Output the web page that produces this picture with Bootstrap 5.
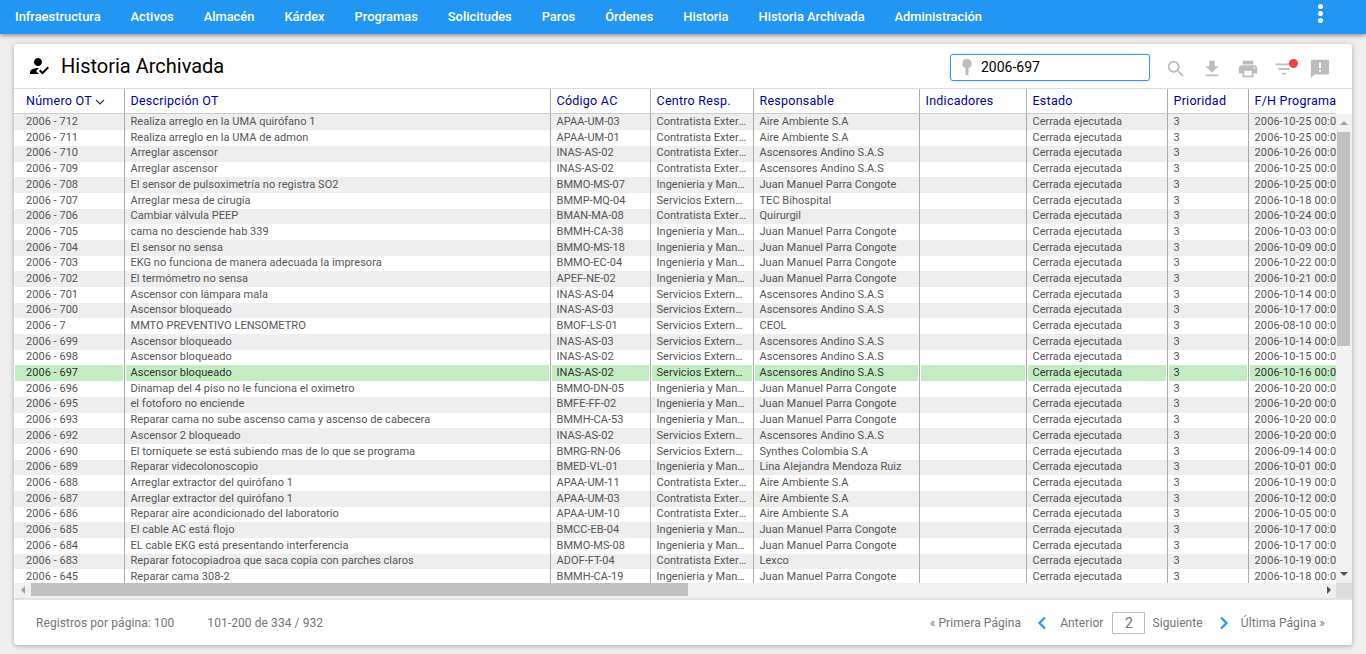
<!doctype html>
<html lang="es"><head><meta charset="utf-8"><title>Historia Archivada</title>
<link href="https://cdn.jsdelivr.net/npm/bootstrap@5.3.0/dist/css/bootstrap.min.css" rel="stylesheet">
<style>
html,body{height:654px;overflow:hidden}
body{background:#eee;font-family:Roboto,"Liberation Sans",sans-serif;color:#000}
.topbar{height:34px;background:#2196f3;box-shadow:0 2px 4px rgba(0,0,0,.35);padding:0 0 0 15px;gap:30px}
.topbar a{color:#fff;font-size:12.88px;font-weight:500;text-decoration:none;line-height:34px}
.dots{margin-left:auto;margin-right:43px;gap:2px;margin-top:-7px}
.dots i{display:block;width:5px;height:5px;border-radius:50%;background:#fff}
.panel{margin:10px 14px 9px;width:1338px;height:601px;background:#fff;border-radius:3px;box-shadow:0 1px 5px rgba(0,0,0,.3);overflow:hidden}
.phead{height:45px;padding-left:13px;border-bottom:1px solid #ddd}
.phead h1{font-size:20px;font-weight:400;margin:0 0 0 10px}
.keybox{width:200px;height:27px;border:1px solid #3f8fef;border-radius:3px;margin-left:auto;margin-right:15px;margin-top:4px;padding-left:11px;font-size:14px;gap:9px;box-shadow:0 0 2px rgba(33,150,243,.4)}
.tools{gap:14px;margin-right:21px;margin-top:6px}
.tools svg{width:22px;height:22px;fill:#bdbdbd;display:block}
.filt{position:relative}
.filt b{position:absolute;right:-3px;top:1px;width:9px;height:9px;border-radius:50%;background:#f44336}
.hcols,.gridwrap{width:1322px;overflow:hidden}
.gridwrap{height:469px}
.htable,.gtable{table-layout:fixed;width:1424px;border-collapse:collapse;margin:0}
.htable th{height:25px;font-size:12.5px;font-weight:400;color:#00009c;padding:2px 0 0 6px;border-left:1px solid #aaa;border-bottom:2px solid #ccc;white-space:nowrap;overflow:hidden;letter-spacing:.25px;vertical-align:middle}
.htable th:first-child,.gtable td:first-child{border-left:0;padding-left:12px}
.gtable tr{height:15.7px}
.gtable td{font-size:11px;line-height:14px;color:#555;padding:0 5px .4px 6px;border-left:1px solid #aaa;white-space:nowrap;overflow:hidden;text-overflow:ellipsis;height:15.7px;letter-spacing:.03px}
.gtable tr:nth-child(odd) td{background:#eee}
.gtable tr.picked td{background:#c3ecc4;color:#333;box-shadow:inset 1px 0 #fff,inset -1px 0 #fff}
.gtable td:last-child{text-overflow:clip;letter-spacing:.15px}
.vbar{width:16px;background:#f1f1f1;position:relative}
.vbar .thumb{position:absolute;left:1px;right:2px;top:18px;height:214px;background:#c1c1c1}
.arrow{position:absolute;width:0;height:0;border:4px solid transparent}
.hbar{height:15px;background:#f1f1f1;position:relative}
.hbar .thumb{position:absolute;left:17px;top:0;width:657px;height:13px;background:#c1c1c1}
.hbar .corner{position:absolute;right:0;top:0;width:16px;height:15px;background:#dcdcdc}
.pfoot{height:47px;border-top:2px solid #e3e3e3;padding:0 27px 0 22px;font-size:12px;color:#757575;letter-spacing:.08px}
.pfoot .sp{margin-left:33px}
.pageno{width:33px;height:22px;border:1px solid #bbb;border-radius:1px;text-align:center;line-height:20px;font-size:14px;margin:0 7px 0 9px}
.chev{width:10px;height:14px;fill:none;stroke:#2196f3;stroke-width:2.2;margin:0 13px 0 16px}
.chev.nx{margin:0 12px 0 16px}
</style></head><body>
<nav class="topbar d-flex align-items-center">
<a href="#">Infraestructura</a><a href="#">Activos</a><a href="#">Almacén</a><a href="#">Kárdex</a><a href="#">Programas</a><a href="#">Solicitudes</a><a href="#">Paros</a><a href="#">Órdenes</a><a href="#">Historia</a><a href="#">Historia Archivada</a><a href="#">Administración</a>
<span class="dots d-flex flex-column"><i></i><i></i><i></i></span>
</nav>
<section class="panel d-flex flex-column">
<header class="phead d-flex align-items-center">
<svg width="24" height="24" viewBox="0 0 24 24"><path d="M9 17l3-2.94c-.39-.04-.68-.06-1-.06-2.67 0-8 1.34-8 4v2h9l-3-3zm2-5c2.21 0 4-1.79 4-4s-1.79-4-4-4-4 1.79-4 4 1.79 4 4 4M15.47 20.5L12 17l1.4-1.41 2.07 2.08 5.13-5.17 1.4 1.41z"/></svg>
<h1>Historia Archivada</h1>
<div class="keybox d-flex align-items-center"><svg width="10" height="17" viewBox="0 0 10 17" fill="#bdbdbd"><path d="M5 0a4.6 4.6 0 0 1 1.7 8.9L6.3 16.5H3.7L3.3 8.9A4.6 4.6 0 0 1 5 0z"/></svg><span>2006-697</span></div>
<div class="tools d-flex align-items-center">
<svg viewBox="0 0 24 24"><path d="M15.5 14h-.79l-.28-.27A6.471 6.471 0 0 0 16 9.5 6.5 6.5 0 1 0 9.5 16c1.61 0 3.09-.59 4.23-1.57l.27.28v.79l5 4.99L20.49 19l-4.99-5zm-6 0C7.01 14 5 11.99 5 9.5S7.01 5 9.5 5 14 7.01 14 9.5 11.99 14 9.5 14z"/></svg>
<svg viewBox="0 0 24 24"><path d="M19 9h-4V3H9v6H5l7 7 7-7zM5 18v2h14v-2H5z"/></svg>
<svg viewBox="0 0 24 24"><path d="M19 8H5c-1.66 0-3 1.34-3 3v6h4v4h12v-4h4v-6c0-1.66-1.34-3-3-3zm-3 11H8v-5h8v5zm3-7c-.55 0-1-.45-1-1s.45-1 1-1 1 .45 1 1-.45 1-1 1zm-1-9H6v4h12V3z"/></svg>
<span class="filt"><svg viewBox="0 0 24 24"><path d="M10 18h4v-2h-4v2zM3 6v2h18V6H3zm3 7h12v-2H6v2z"/></svg><b></b></span>
<svg viewBox="0 0 24 24"><path d="M20 2H4c-1.1 0-1.99.9-1.99 2L2 22l4-4h14c1.1 0 2-.9 2-2V4c0-1.1-.9-2-2-2zm-7 9h-2V5h2v6zm0 4h-2v-2h2v2z"/></svg>
</div>
</header>
<div class="hcols"><table class="htable"><colgroup><col style="width:110px"><col style="width:426px"><col style="width:100px"><col style="width:103px"><col style="width:166px"><col style="width:107px"><col style="width:141px"><col style="width:81px"><col style="width:190px"></colgroup><tr><th>Número OT <svg width="10" height="6" viewBox="0 0 10 6" fill="none" stroke="#333" stroke-width="1.2"><path d="M1 1l4 4 4-4"/></svg></th><th>Descripción OT</th><th>Código AC</th><th>Centro Resp.</th><th>Responsable</th><th>Indicadores</th><th>Estado</th><th>Prioridad</th><th>F/H Programada</th></tr></table></div>
<div class="d-flex">
<div class="gridwrap"><table class="gtable"><colgroup><col style="width:110px"><col style="width:426px"><col style="width:100px"><col style="width:103px"><col style="width:166px"><col style="width:107px"><col style="width:141px"><col style="width:81px"><col style="width:190px"></colgroup><tbody>
<tr><td>2006 - 712</td><td>Realiza arreglo en la UMA quirófano 1</td><td>APAA-UM-03</td><td>Contratista Externo</td><td>Aire Ambiente S.A</td><td></td><td>Cerrada ejecutada</td><td>3</td><td>2006-10-25 00:00</td></tr>
<tr><td>2006 - 711</td><td>Realiza arreglo en la UMA de admon</td><td>APAA-UM-01</td><td>Contratista Externo</td><td>Aire Ambiente S.A</td><td></td><td>Cerrada ejecutada</td><td>3</td><td>2006-10-25 00:00</td></tr>
<tr><td>2006 - 710</td><td>Arreglar ascensor</td><td>INAS-AS-02</td><td>Contratista Externo</td><td>Ascensores Andino S.A.S</td><td></td><td>Cerrada ejecutada</td><td>3</td><td>2006-10-26 00:00</td></tr>
<tr><td>2006 - 709</td><td>Arreglar ascensor</td><td>INAS-AS-02</td><td>Contratista Externo</td><td>Ascensores Andino S.A.S</td><td></td><td>Cerrada ejecutada</td><td>3</td><td>2006-10-25 00:00</td></tr>
<tr><td>2006 - 708</td><td>El sensor de pulsoximetría no registra SO2</td><td>BMMO-MS-07</td><td>Ingenieria y Mantenimiento</td><td>Juan Manuel Parra Congote</td><td></td><td>Cerrada ejecutada</td><td>3</td><td>2006-10-25 00:00</td></tr>
<tr><td>2006 - 707</td><td>Arreglar mesa de cirugía</td><td>BMMP-MQ-04</td><td>Servicios Externalizados</td><td>TEC Bihospital</td><td></td><td>Cerrada ejecutada</td><td>3</td><td>2006-10-18 00:00</td></tr>
<tr><td>2006 - 706</td><td>Cambiar válvula PEEP</td><td>BMAN-MA-08</td><td>Contratista Externo</td><td>Quirurgil</td><td></td><td>Cerrada ejecutada</td><td>3</td><td>2006-10-24 00:00</td></tr>
<tr><td>2006 - 705</td><td>cama no desciende hab 339</td><td>BMMH-CA-38</td><td>Ingenieria y Mantenimiento</td><td>Juan Manuel Parra Congote</td><td></td><td>Cerrada ejecutada</td><td>3</td><td>2006-10-03 00:00</td></tr>
<tr><td>2006 - 704</td><td>El sensor no sensa</td><td>BMMO-MS-18</td><td>Ingenieria y Mantenimiento</td><td>Juan Manuel Parra Congote</td><td></td><td>Cerrada ejecutada</td><td>3</td><td>2006-10-09 00:00</td></tr>
<tr><td>2006 - 703</td><td>EKG no funciona de manera adecuada la impresora</td><td>BMMO-EC-04</td><td>Ingenieria y Mantenimiento</td><td>Juan Manuel Parra Congote</td><td></td><td>Cerrada ejecutada</td><td>3</td><td>2006-10-22 00:00</td></tr>
<tr><td>2006 - 702</td><td>El termómetro no sensa</td><td>APEF-NE-02</td><td>Ingenieria y Mantenimiento</td><td>Juan Manuel Parra Congote</td><td></td><td>Cerrada ejecutada</td><td>3</td><td>2006-10-21 00:00</td></tr>
<tr><td>2006 - 701</td><td>Ascensor con lámpara mala</td><td>INAS-AS-04</td><td>Servicios Externalizados</td><td>Ascensores Andino S.A.S</td><td></td><td>Cerrada ejecutada</td><td>3</td><td>2006-10-14 00:00</td></tr>
<tr><td>2006 - 700</td><td>Ascensor bloqueado</td><td>INAS-AS-03</td><td>Servicios Externalizados</td><td>Ascensores Andino S.A.S</td><td></td><td>Cerrada ejecutada</td><td>3</td><td>2006-10-17 00:00</td></tr>
<tr><td>2006 - 7</td><td>MMTO PREVENTIVO LENSOMETRO</td><td>BMOF-LS-01</td><td>Servicios Externalizados</td><td>CEOL</td><td></td><td>Cerrada ejecutada</td><td>3</td><td>2006-08-10 00:00</td></tr>
<tr><td>2006 - 699</td><td>Ascensor bloqueado</td><td>INAS-AS-03</td><td>Servicios Externalizados</td><td>Ascensores Andino S.A.S</td><td></td><td>Cerrada ejecutada</td><td>3</td><td>2006-10-14 00:00</td></tr>
<tr><td>2006 - 698</td><td>Ascensor bloqueado</td><td>INAS-AS-02</td><td>Servicios Externalizados</td><td>Ascensores Andino S.A.S</td><td></td><td>Cerrada ejecutada</td><td>3</td><td>2006-10-15 00:00</td></tr>
<tr class="picked"><td>2006 - 697</td><td>Ascensor bloqueado</td><td>INAS-AS-02</td><td>Servicios Externalizados</td><td>Ascensores Andino S.A.S</td><td></td><td>Cerrada ejecutada</td><td>3</td><td>2006-10-16 00:00</td></tr>
<tr><td>2006 - 696</td><td>Dinamap del 4 piso no le funciona el oximetro</td><td>BMMO-DN-05</td><td>Ingenieria y Mantenimiento</td><td>Juan Manuel Parra Congote</td><td></td><td>Cerrada ejecutada</td><td>3</td><td>2006-10-20 00:00</td></tr>
<tr><td>2006 - 695</td><td>el fotoforo no enciende</td><td>BMFE-FF-02</td><td>Ingenieria y Mantenimiento</td><td>Juan Manuel Parra Congote</td><td></td><td>Cerrada ejecutada</td><td>3</td><td>2006-10-20 00:00</td></tr>
<tr><td>2006 - 693</td><td>Reparar cama no sube ascenso cama y ascenso de cabecera</td><td>BMMH-CA-53</td><td>Ingenieria y Mantenimiento</td><td>Juan Manuel Parra Congote</td><td></td><td>Cerrada ejecutada</td><td>3</td><td>2006-10-20 00:00</td></tr>
<tr><td>2006 - 692</td><td>Ascensor 2 bloqueado</td><td>INAS-AS-02</td><td>Servicios Externalizados</td><td>Ascensores Andino S.A.S</td><td></td><td>Cerrada ejecutada</td><td>3</td><td>2006-10-20 00:00</td></tr>
<tr><td>2006 - 690</td><td>El torniquete se está subiendo mas de lo que se programa</td><td>BMRG-RN-06</td><td>Servicios Externalizados</td><td>Synthes Colombia S.A</td><td></td><td>Cerrada ejecutada</td><td>3</td><td>2006-09-14 00:00</td></tr>
<tr><td>2006 - 689</td><td>Reparar videcolonoscopio</td><td>BMED-VL-01</td><td>Ingenieria y Mantenimiento</td><td>Lina Alejandra Mendoza Ruiz</td><td></td><td>Cerrada ejecutada</td><td>3</td><td>2006-10-01 00:00</td></tr>
<tr><td>2006 - 688</td><td>Arreglar extractor del quirófano 1</td><td>APAA-UM-11</td><td>Contratista Externo</td><td>Aire Ambiente S.A</td><td></td><td>Cerrada ejecutada</td><td>3</td><td>2006-10-19 00:00</td></tr>
<tr><td>2006 - 687</td><td>Arreglar extractor del quirófano 1</td><td>APAA-UM-03</td><td>Contratista Externo</td><td>Aire Ambiente S.A</td><td></td><td>Cerrada ejecutada</td><td>3</td><td>2006-10-12 00:00</td></tr>
<tr><td>2006 - 686</td><td>Reparar aire acondicionado del laboratorio</td><td>APAA-UM-10</td><td>Contratista Externo</td><td>Aire Ambiente S.A</td><td></td><td>Cerrada ejecutada</td><td>3</td><td>2006-10-05 00:00</td></tr>
<tr><td>2006 - 685</td><td>El cable AC está flojo</td><td>BMCC-EB-04</td><td>Ingenieria y Mantenimiento</td><td>Juan Manuel Parra Congote</td><td></td><td>Cerrada ejecutada</td><td>3</td><td>2006-10-17 00:00</td></tr>
<tr><td>2006 - 684</td><td>EL cable EKG está presentando interferencia</td><td>BMMO-MS-08</td><td>Ingenieria y Mantenimiento</td><td>Juan Manuel Parra Congote</td><td></td><td>Cerrada ejecutada</td><td>3</td><td>2006-10-17 00:00</td></tr>
<tr><td>2006 - 683</td><td>Reparar fotocopiadroa que saca copia con parches claros</td><td>ADOF-FT-04</td><td>Contratista Externo</td><td>Lexco</td><td></td><td>Cerrada ejecutada</td><td>3</td><td>2006-10-19 00:00</td></tr>
<tr><td>2006 - 645</td><td>Reparar cama 308-2</td><td>BMMH-CA-19</td><td>Ingenieria y Mantenimiento</td><td>Juan Manuel Parra Congote</td><td></td><td>Cerrada ejecutada</td><td>3</td><td>2006-10-18 00:00</td></tr>
</tbody></table></div>
<div class="vbar flex-grow-1"><span class="thumb"></span><span class="arrow" style="left:4px;top:3px;border-bottom-color:#a0a0a0"></span><span class="arrow" style="left:4px;bottom:3px;border-top-color:#505050"></span></div>
</div>
<div class="hbar"><span class="thumb"></span><span class="arrow" style="left:3px;top:3px;border-right-color:#a0a0a0"></span><span class="corner"></span><span class="arrow" style="right:17px;top:3px;border-left-color:#505050"></span></div>
<footer class="pfoot d-flex align-items-center">
<span>Registros por página: 100</span><span class="sp">101-200 de 334 / 932</span>
<span class="ms-auto">« Primera Página</span>
<svg class="chev" viewBox="0 0 10 14"><path d="M8 1.5L2.5 7 8 12.5"/></svg>
<span>Anterior</span><span class="pageno">2</span><span>Siguiente</span>
<svg class="chev nx" viewBox="0 0 10 14"><path d="M2 1.5L7.5 7 2 12.5"/></svg>
<span>Última Página »</span>
</footer>
</section>
<script src="https://cdn.jsdelivr.net/npm/bootstrap@5.3.0/dist/js/bootstrap.bundle.min.js"></script>
</body></html>
